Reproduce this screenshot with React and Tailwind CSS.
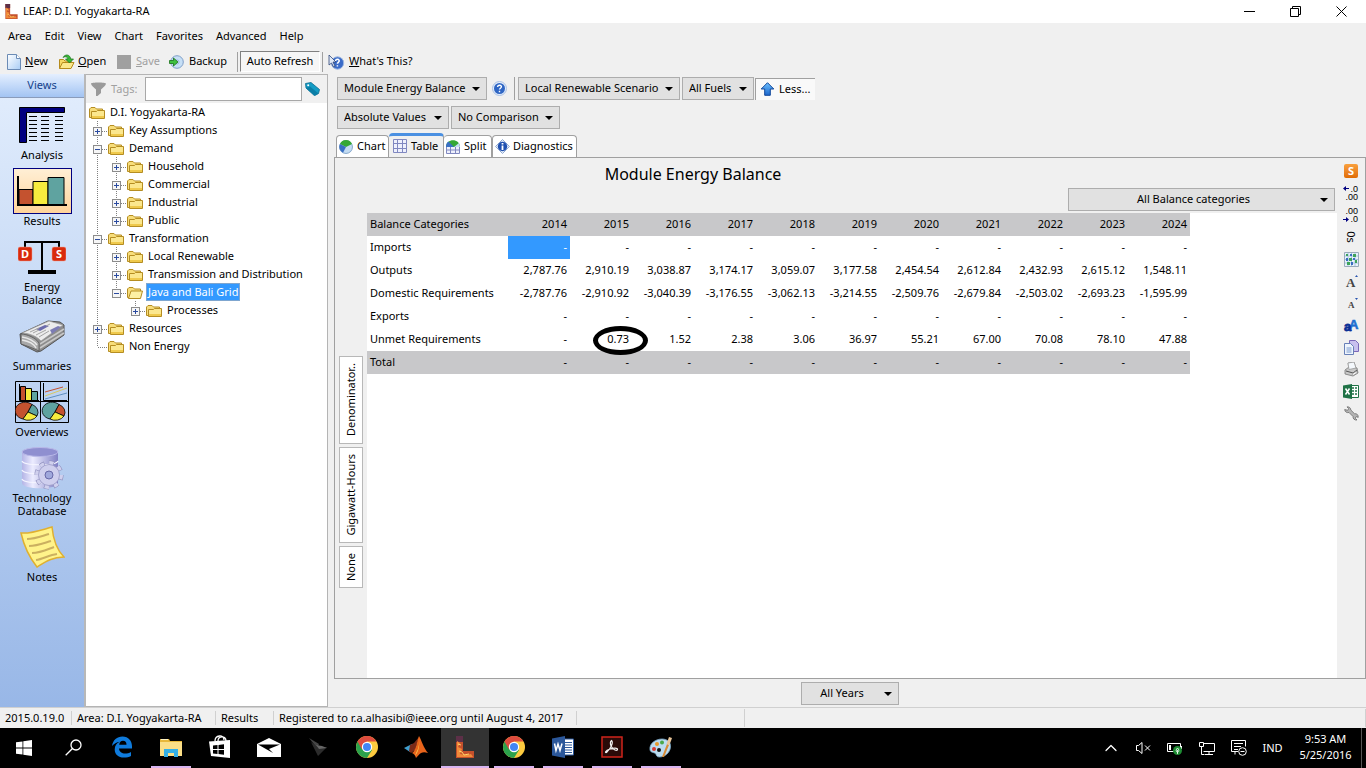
import { ChevronUp } from "lucide-react";

const menus = ["Area", "Edit", "View", "Chart", "Favorites", "Advanced", "Help"];

const views = [
  { lines: ["Analysis"], icon: <AnalysisIcon /> },
  { lines: ["Results"], icon: <ResultsIcon />, active: true },
  { lines: ["Energy", "Balance"], icon: <BalanceIcon /> },
  { lines: ["Summaries"], icon: <SummariesIcon /> },
  { lines: ["Overviews"], icon: <OverviewsIcon /> },
  { lines: ["Technology", "Database"], icon: <DatabaseIcon /> },
  { lines: ["Notes"], icon: <NotesIcon /> },
];

// guides: one letter per indent cell
// v = line through, e = blank, + / - = expander (more siblings), p / m = expander (last), l = last leaf
const tree = [
  { label: "D.I. Yogyakarta-RA", guides: "" },
  { label: "Key Assumptions", guides: "+" },
  { label: "Demand", guides: "-" },
  { label: "Household", guides: "v+" },
  { label: "Commercial", guides: "v+" },
  { label: "Industrial", guides: "v+" },
  { label: "Public", guides: "vp" },
  { label: "Transformation", guides: "-" },
  { label: "Local Renewable", guides: "v+" },
  { label: "Transmission and Distribution", guides: "v+" },
  { label: "Java and Bali Grid", guides: "vm", selected: true },
  { label: "Processes", guides: "vep" },
  { label: "Resources", guides: "+" },
  { label: "Non Energy", guides: "l" },
];

const years = [2014, 2015, 2016, 2017, 2018, 2019, 2020, 2021, 2022, 2023, 2024];
const dashes = years.map(() => "-");

const rows = [
  { name: "Imports", values: dashes },
  { name: "Outputs", values: ["2,787.76", "2,910.19", "3,038.87", "3,174.17", "3,059.07", "3,177.58", "2,454.54", "2,612.84", "2,432.93", "2,615.12", "1,548.11"] },
  { name: "Domestic Requirements", values: ["-2,787.76", "-2,910.92", "-3,040.39", "-3,176.55", "-3,062.13", "-3,214.55", "-2,509.76", "-2,679.84", "-2,503.02", "-2,693.23", "-1,595.99"] },
  { name: "Exports", values: dashes },
  { name: "Unmet Requirements", values: ["-", "0.73", "1.52", "2.38", "3.06", "36.97", "55.21", "67.00", "70.08", "78.10", "47.88"] },
];

export default function App() {
  return (
    <div className="flex flex-col min-h-screen bg-[#f0f0f0] font-['Noto_Sans',sans-serif] text-xs text-black whitespace-nowrap cursor-default">
      <TitleBar />
      <MenuBar />
      <Toolbar />
      <div className="flex flex-1">
        <ViewBar />
        <TreePanel />
        <ResultsPanel />
      </div>
      <StatusBar />
      <Taskbar />
    </div>
  );
}

function TitleBar() {
  return (
    <header className="flex items-center h-[23px] bg-white pl-1 pr-0.5">
      <LeapIcon size={15} />
      <h1 className="ml-1 flex-1 text-[11px]">LEAP: D.I. Yogyakarta-RA</h1>
      <button aria-label="Minimize" className="w-[46px] h-5 flex items-center justify-center">
        <svg width="11" height="11"><path d="M0 5.500h11" stroke="#000" /></svg>
      </button>
      <button aria-label="Restore" className="w-[46px] h-5 flex items-center justify-center">
        <svg width="11" height="11" fill="none" stroke="#000"><path d="M.5 2.500h8v8h-8zM2.500 2.500v-2h8v8h-2" /></svg>
      </button>
      <button aria-label="Close" className="w-[46px] h-5 flex items-center justify-center">
        <svg width="11" height="11" stroke="#000"><path d="M.5.500l10 10M10.500.500l-10 10" /></svg>
      </button>
    </header>
  );
}

function MenuBar() {
  return (
    <nav className="flex items-center h-[26px] pl-2 gap-[13px] text-[11px]">
      {menus.map((m) => <button key={m}>{m}</button>)}
    </nav>
  );
}

function Toolbar() {
  return (
    <div className="flex items-center h-[25px] pl-[7px] text-[11px]">
      <button className="flex items-center gap-1 w-[51px]">
        <svg width="14" height="16" viewBox="0 0 14 16">
          <defs>
            <linearGradient id="page" x2="1" y2="1"><stop offset="0" stopColor="#fff" /><stop offset="1" stopColor="#a9cdf5" /></linearGradient>
          </defs>
          <path d="M.5.500h9l4 4v11H.5z" fill="url(#page)" stroke="#6b8bb5" />
          <path d="M9.500.500v4h4" fill="#fff" stroke="#6b8bb5" />
        </svg>
        <span><u>N</u>ew</span>
      </button>
      <button className="flex items-center gap-[3px] w-[59px]">
        <svg width="17" height="16" viewBox="0 0 17 16">
          <path d="M1.500 14.500V5.500h4l1.500 1.500h6v3" fill="#f6d864" stroke="#b58b1c" />
          <path d="M1.500 14.500l3-6h11.500l-3 6z" fill="#fbe88c" stroke="#b58b1c" />
          <path d="M5 3.500C7.500-.5 12 .5 12.800 5h2.700l-4 4-4-4h2.400C9.500 3 7.500 2 5 3.500z" fill="#37b837" stroke="#187018" strokeWidth=".7" />
        </svg>
        <span><u>O</u>pen</span>
      </button>
      <button disabled className="flex items-center gap-[5px] w-[52px] text-[#a0a0a0]">
        <span className="size-3.5 bg-[#a0a0a0]" />
        <span><u>S</u>ave</span>
      </button>
      <button className="flex items-center gap-[5px] w-[68px]">
        <svg width="15" height="14" viewBox="0 0 15 14">
          <circle cx="8" cy="7" r="6.300" fill="#c6dff6" stroke="#7f9fc8" />
          <circle cx="8" cy="7" r="2" fill="#fff" stroke="#8fb0d8" />
          <path d="M.5 5.500h4V3l4.500 4-4.500 4V8.500h-4z" fill="#3fc03f" stroke="#187018" strokeWidth=".8" />
        </svg>
        Backup
      </button>
      <span className="w-px h-5 bg-[#a0a0a0] mr-0.5" />
      <button className="h-[21px] w-20 bg-[#f6f6f6] border border-r-white border-b-white border-[#808080]">Auto Refresh</button>
      <span className="w-px h-5 bg-[#a0a0a0] ml-0.5 mr-[5px]" />
      <button className="flex items-center gap-1">
        <svg width="17" height="16" viewBox="0 0 17 16">
          <circle cx="9.500" cy="9" r="6.200" fill="#3a6bc8" stroke="#9fb8e0" />
          <path d="M7.500 7c.4-2.500 4.200-2 3.700.2-.3 1.200-1.800 1.200-1.800 2.600M9.400 11.300v1.200" stroke="#fff" strokeWidth="1.500" fill="none" />
          <path d="M1 1v10l2.500-2 2 4 1.500-1-2-4h3z" fill="#dfe8f6" stroke="#304878" strokeWidth=".8" />
        </svg>
        <span><u>W</u>hat's This?</span>
      </button>
    </div>
  );
}

function ViewBar() {
  return (
    <aside className="w-[86px] border-r-2 border-[#b8b8b8] bg-linear-to-b from-[#e3eefd] to-[#98b7e7]">
      <h2 className="h-6 flex items-center justify-center text-[11px] text-[#15428b] border-b border-[#8a9cba] bg-linear-to-b from-[#e4efff] to-[#a3c4f2]">Views</h2>
      <div className="flex flex-col gap-[7px] pt-1">
        {views.map((v) => (
          <button key={v.lines[0]} className="flex flex-col items-center text-[11px] leading-[13px]">
            <span className={v.active ? "h-[46px] w-[59px] flex items-center justify-center border border-[#000080] bg-linear-to-b from-[#ffefd5] to-[#ffd39a]" : "h-[46px] flex items-center justify-center"}>
              {v.icon}
            </span>
            {v.lines.map((l) => <span key={l}>{l}</span>)}
          </button>
        ))}
      </div>
    </aside>
  );
}

function TreePanel() {
  return (
    <section className="w-[242px] flex flex-col border-r border-b border-[#b4b4b4]">
      <div className="flex items-center h-[29px] pl-[5px] border-t border-[#b4b4b4]">
        <svg width="15" height="14" viewBox="0 0 15 14" fill="#9a9a9a"><path d="M0 1.500C0 0 15 0 15 1.500c0 2-3 4-5 6V11l-3.500 3H5V7.500c-2-2-5-4-5-6z" /></svg>
        <label htmlFor="tags" className="ml-[5px] w-[34px] text-[11px] text-[#a0a0a0]">Tags:</label>
        <input id="tags" className="w-[157px] h-6 bg-white border border-[#a8a8a8] outline-none px-1" />
        <svg width="15" height="14" viewBox="0 0 15 14" className="ml-[3px]">
          <path d="M.5 1.500L6 .5l8.500 7-1 4-4 2.200L1 6z" fill="#149cc4" stroke="#0b6c90" strokeWidth=".8" />
          <path d="M1 6l8.500 7.500 4-2L5 4.500z" fill="#0b7ea6" />
          <circle cx="3.200" cy="3.200" r="1" fill="#fff" />
        </svg>
      </div>
      <ul className="flex-1 bg-white pl-[3px] text-[11px]">
        {tree.map((n) => (
          <li key={n.label} className="flex items-center h-[18px]">
            {[...n.guides].map((g, i) => <Guide key={i} kind={g} />)}
            <FolderIcon open={n.selected} />
            <button className={n.selected ? "ml-[3px] px-px h-[18px] leading-4 bg-[#3399ff] border border-[#7fa6cf] text-white" : "ml-[5px] leading-4"}>{n.label}</button>
          </li>
        ))}
      </ul>
    </section>
  );
}

function Guide({ kind }) {
  const hasBox = "+-pm".includes(kind);
  const through = "v+-".includes(kind);
  return (
    <svg width="19" height="18" className="shrink-0" fill="none">
      {kind !== "e" && <path d={through ? "M8.500 0v18" : "M8.500 0v10"} stroke="#808080" strokeDasharray="1 1" />}
      {kind !== "e" && kind !== "v" && <path d="M9 10.500h9" stroke="#808080" strokeDasharray="1 1" />}
      {hasBox && <rect x="4.500" y="6.500" width="8" height="8" fill="#f6f6f6" stroke="#8c8c8c" />}
      {hasBox && <path d="M6 10.500h5" stroke="#2b4ba0" />}
      {(kind === "+" || kind === "p") && <path d="M8.500 8v5" stroke="#2b4ba0" />}
    </svg>
  );
}

function FolderIcon({ open }) {
  return (
    <svg width="16" height="14" viewBox="0 0 16 14" className="shrink-0 mt-0.5">
      <path d="M.5 11.500V3l1.500-1.500h4L7.500 3h6v8.500z" fill="#f7dd7a" stroke="#b58d22" />
      {open
        ? <path d="M1.500 12.500l2.500-7.500h11.500l-2 7.500z" fill="#fdf0a4" stroke="#b58d22" />
        : <path d="M2.500 12.500V5.500h5l1-1h7v8z" fill="#fbe78e" stroke="#b58d22" />}
      {!open && <path d="M3 11h12" stroke="#efc94c" strokeWidth="2" />}
    </svg>
  );
}

function DropDown({ label, width, center }) {
  return (
    <span className={`relative inline-flex ${width}`}>
      <select aria-label={label} className={`appearance-none w-full h-[23px] bg-[#e1e1e1] border border-[#adadad] text-[11px] ${center ? "[text-align-last:center] pr-4" : "pl-1.5"}`}>
        <option>{label}</option>
      </select>
      <svg width="8" height="4" className="absolute right-[7px] top-[10px] pointer-events-none"><path d="M0 0h8L4 4z" /></svg>
    </span>
  );
}

function ResultsPanel() {
  return (
    <main className="flex-1 min-w-0 flex flex-col">
      <div className="flex items-center pl-[9px] pt-[3px]">
        <DropDown label="Module Energy Balance" width="w-[150px]" />
        <button aria-label="Help" className="ml-[5px] mr-[7px]">
          <svg width="15" height="15" viewBox="0 0 15 15">
            <circle cx="7.500" cy="7.500" r="7" fill="#e4edfa" stroke="#a9c0e4" />
            <circle cx="7.500" cy="7.500" r="5.500" fill="#2f66c4" />
            <path d="M5.500 6c.3-2.500 4.200-2.300 3.900 0-.2 1.200-1.900 1.300-1.900 2.600M7.500 9.800v1.400" stroke="#fff" strokeWidth="1.400" fill="none" />
          </svg>
        </button>
        <span className="w-px h-[23px] bg-[#a0a0a0] mr-[3px]" />
        <div className="flex gap-0.5">
          <DropDown label="Local Renewable Scenario" width="w-[162px]" />
          <DropDown label="All Fuels" width="w-[72px]" />
        </div>
        <button className="flex items-center gap-1 h-[22px] w-[60px] ml-px pl-1 bg-[#f9f9f9] border-t border-l border-[#a0a0a0] text-[11px]">
          <svg width="15" height="14" viewBox="0 0 15 14">
            <defs>
              <linearGradient id="arrow" x2="0" y2="1"><stop offset="0" stopColor="#6cc0ff" /><stop offset="1" stopColor="#1b66cc" /></linearGradient>
            </defs>
            <path d="M7.500.7l6.300 6.300h-3.500v6.300H4.700V7H1.200z" fill="url(#arrow)" stroke="#12489c" />
          </svg>
          Less...
        </button>
      </div>
      <div className="flex gap-0.5 pl-[9px] pt-1.5">
        <DropDown label="Absolute Values" width="w-28" />
        <DropDown label="No Comparison" width="w-[109px]" />
      </div>

      <div role="tablist" className="flex items-end pl-2 h-[28px] text-[11px]">
        <button role="tab" className="flex items-center gap-1 w-[53px] h-[22px] pl-0.5 bg-white border border-b-0 border-[#a0a0a0] rounded-t-sm"><GlobeIcon />Chart</button>
        <button role="tab" aria-selected="true" className="flex items-center gap-1 w-[55px] h-[25px] pl-1 -mb-px pb-0.5 border-t-3 border-r border-t-[#4a90e2] border-r-[#a0a0a0] bg-[#f0f0f0] rounded-t-sm"><GridIcon />Table</button>
        <button role="tab" className="flex items-center gap-1 w-12 h-[22px] pl-0.5 bg-white border border-l-0 border-b-0 border-[#a0a0a0] rounded-t-sm"><SplitIcon />Split</button>
        <button role="tab" className="flex items-center gap-[3px] w-[85px] h-[22px] pl-0.5 bg-white border border-b-0 border-[#a0a0a0] rounded-t-sm"><InfoIcon />Diagnostics</button>
      </div>

      <div className="flex-1 flex ml-1.5 border border-[#a0a0a0]">
        <div className="flex-1 min-w-0 flex flex-col">
          <h2 className="h-[30px] pt-px pr-[286px] flex items-center justify-center text-base">Module Energy Balance</h2>
          <div className="flex justify-end pr-0.5 pb-0.5">
            <DropDown label="All Balance categories" width="w-[267px]" center />
          </div>
          <div className="flex flex-1">
            <div className="w-8 pl-1 pt-[143px] flex flex-col gap-[3px] text-[11px]">
              <SideButton height="h-[88px]">Denominator..</SideButton>
              <SideButton height="h-24">Gigawatt-Hours</SideButton>
              <SideButton height="h-[42px]">None</SideButton>
            </div>
            <div className="flex-1 bg-white">
              <BalanceTable />
            </div>
          </div>
        </div>
        <IconStrip />
      </div>

      <div className="flex justify-center items-center h-7 pl-1.5">
        <DropDown label="All Years" width="w-[98px]" center />
      </div>
    </main>
  );
}

function SideButton({ height, children }) {
  return (
    <button className={`w-6 flex items-center justify-center bg-white border border-[#b8b8b8] ${height}`}>
      <span className="[writing-mode:vertical-rl] rotate-180">{children}</span>
    </button>
  );
}

function BalanceTable() {
  return (
    <table className="table-fixed w-[823px] text-[11px]">
      <thead>
        <tr className="h-[23px] bg-[#c8c8ca]">
          <th className="w-[141px] pl-[3px] text-left font-normal">Balance Categories</th>
          {years.map((y) => <th key={y} className="pr-[3px] text-right font-normal">{y}</th>)}
        </tr>
      </thead>
      <tbody>
        {rows.map((r, ri) => (
          <tr key={r.name} className="h-[23px]">
            <td className="pl-[3px]">{r.name}</td>
            {r.values.map((v, i) => (
              <td key={i} className={ri === 0 && i === 0 ? "pr-[3px] text-right bg-[#3399ff] text-white" : "relative pr-[3px] text-right"}>
                {v}
                {v === "0.73" && <span className="absolute left-[23px] -top-0.5 w-[55px] h-[29px] border-[5px] border-black rounded-[50%]" />}
              </td>
            ))}
          </tr>
        ))}
      </tbody>
      <tfoot>
        <tr className="h-[23px] bg-[#c8c8ca]">
          <td className="pl-[3px]">Total</td>
          {years.map((y) => <td key={y} className="pr-[3px] text-right">-</td>)}
        </tr>
      </tfoot>
    </table>
  );
}

function IconStrip() {
  const items = [
    ["Sankey", <span className="size-3.5 rounded-xs bg-linear-to-b from-[#f9a03c] to-[#e06c00] text-white text-[11px] leading-[14px] font-bold">S</span>],
    ["More decimals", <svg width="16" height="16" viewBox="0 0 16 16"><path d="M0 3.500L3 1v2h3v1H3v2z" fill="#000080" /><Digits top=".0" bottom=".00" /></svg>],
    ["Fewer decimals", <svg width="16" height="16" viewBox="0 0 16 16"><path d="M6 12.500L3 10v2H0v1h3v2z" fill="#000080" /><Digits top=".00" bottom=".0" /></svg>],
    ["Show zeros", <span className="rotate-90 text-[11px] leading-3">0s</span>],
    ["Grid", (
      <svg width="15" height="15" viewBox="0 0 15 15">
        <path d="M.5.500h14v14H.5z" fill="#e8f2fa" stroke="#9ab" />
        <path d="M4 1v13M7.500 1v13M11 1v13M1 4h13M1 7.500h13M1 11h13" stroke="#a8c4e0" />
        <path d="M2 2h2v2H2zM9 2h3v3H9zM5 6h3v3H5zM11 8h2v3h-2zM3 10h3v3H3z" fill="#3da35a" />
        <path d="M6 2h2v2H6zM2 6h2v3H2zM9 6h2v2H9zM7 10h2v3H7z" fill="#3a6cc0" />
      </svg>
    )],
    ["Larger font", <svg width="15" height="15" viewBox="0 0 15 15"><text x="2" y="13" fontSize="13" fontWeight="bold" fontFamily="Liberation Serif, serif" fill="#444">A</text><path d="M11 3l1.500-2L14 3z" fill="#2a55b0" /></svg>],
    ["Smaller font", <svg width="15" height="15" viewBox="0 0 15 15"><text x="4" y="12" fontSize="9" fontWeight="bold" fontFamily="Liberation Serif, serif" fill="#444">A</text><path d="M11 2l1.500 2L14 2z" fill="#2a55b0" /></svg>],
    ["Font", <svg width="18" height="16" viewBox="0 0 18 16" fontWeight="bold" fontFamily="Liberation Sans, sans-serif"><text x="7" y="12" fontSize="13" fill="#1c6fd0" stroke="#1c6fd0" strokeWidth=".6">A</text><text x="2" y="14" fontSize="13" fill="#0a2f96" stroke="#0a2f96" strokeWidth=".8">a</text></svg>],
    ["Copy", (
      <svg width="15" height="15" viewBox="0 0 15 15">
        <path d="M5.500.500h6l3 3v8h-9z" fill="#c9c0ee" stroke="#7b68b8" />
        <path d="M.5 3.500h6l3 3v8H.5z" fill="#eef4fc" stroke="#6880b8" />
        <path d="M2.500 8h5M2.500 10h5M2.500 12h5" stroke="#7b9ad0" />
      </svg>
    )],
    ["Print", (
      <svg width="15" height="15" viewBox="0 0 15 15">
        <path d="M4 1l6-1 2 6-7 2z" fill="#fff" stroke="#999" strokeWidth=".8" />
        <path d="M1 8l4-3 8 1 1 5-5 3-8-2z" fill="#c8c8c8" stroke="#777" strokeWidth=".8" />
        <path d="M4 1l6-1 2 6-7 1.500z" fill="#f4f8fc" stroke="#999" strokeWidth=".8" />
        <path d="M2 9l7 2 4-3" stroke="#555" fill="none" />
        <path d="M8 12l5-3v2l-4 2.500z" fill="#fff" stroke="#888" strokeWidth=".6" />
      </svg>
    )],
    ["Excel", (
      <svg width="16" height="15" viewBox="0 0 16 15">
        <path d="M8 1.500h7.500v12H8z" fill="#fff" stroke="#1f7246" />
        <path d="M9 4h2M9 7h2M9 10h2M12 4h2M12 7h2M12 10h2" stroke="#1f7246" strokeWidth="1.500" />
        <path d="M0 1.500L9 0v15l-9-1.500z" fill="#1f7246" />
        <path d="M2.500 4.500l4 6M6.500 4.500l-4 6" stroke="#fff" strokeWidth="1.500" />
      </svg>
    )],
    ["Settings", (
      <svg width="15" height="15" viewBox="0 0 15 15">
        <path d="M.7 3.500C.7 6 3 7 5 6.500l4 4c-.3 2 1.500 4 4 3.500l-1.800-1.800 1-1.600 2 .8c.3-2.600-1.400-4-3.700-3.700L6.800 4C7 2 5 .5 3 .9l1.700 1.800-1 1.600z" fill="#b4b4b4" stroke="#6c6c6c" strokeWidth=".8" />
      </svg>
    )],
  ];
  return (
    <div className="w-7 pt-0.5 flex flex-col items-center">
      {items.map(([name, icon]) => (
        <button key={name} aria-label={name} className="w-6 h-[22px] flex items-center justify-center">{icon}</button>
      ))}
    </div>
  );
}

function Digits({ top, bottom }) {
  return (
    <g fontSize="9" fontFamily="Liberation Sans, sans-serif" textAnchor="end">
      <text x="15" y="7">{top}</text>
      <text x="15" y="15">{bottom}</text>
    </g>
  );
}

function StatusBar() {
  return (
    <footer className="flex items-center h-[21px] border-t border-[#d0d0d0] text-[11px]">
      <span className="w-[72px] pl-[5px] border-r border-[#d0d0d0]">2015.0.19.0</span>
      <span className="w-36 pl-[5px] border-r border-[#d0d0d0]">Area: D.I. Yogyakarta-RA</span>
      <span className="w-[58px] pl-[5px] border-r border-[#d0d0d0]">Results</span>
      <span className="w-[303px] pl-[5px] border-r border-[#d0d0d0]">Registered to r.a.alhasibi@ieee.org until August 4, 2017</span>
      <span className="w-[168px] h-[18px] border-r border-[#d0d0d0]" />
      <span className="flex-1 h-[18px] border-r border-[#d0d0d0]" />
    </footer>
  );
}

function Taskbar() {
  const apps = [
    ["Search", <svg width="17" height="17" viewBox="0 0 17 17" fill="none" stroke="#fff" strokeWidth="1.300"><circle cx="11" cy="6" r="5" /><path d="M7.500 9.500L.7 16.300" /></svg>],
    ["Edge", (
      <svg width="22" height="22" viewBox="0 0 22 22">
        <path d="M1 10C2 4 6 .5 11.500.5 17.500.5 21 5 21 10v2.500H8c.2 3.500 3 5 6 5 2.200 0 4.200-.6 6-1.600v4.200c-2 1-4.300 1.500-7 1.500-5.800 0-9.300-3.500-9.300-8.200 0-3.500 1.800-6.200 5-7.700C5.500 6.200 3 7.600 1 10zm7.200-1.300h7.300C15.500 6 14.300 4.800 12 4.800c-2.200 0-3.500 1.500-3.800 3.900z" fill="#0f7bdc" />
      </svg>
    )],
    ["File Explorer", (
      <svg width="22" height="19" viewBox="0 0 22 19">
        <path d="M0 1h9l1 2h12v15H0z" fill="#e8b83a" />
        <path d="M0 4h22v14H0z" fill="#fbdf87" />
        <path d="M1 1.500h7" stroke="#fff3c4" />
        <path d="M4 19v-8h14v8h-4v-4H8v4z" fill="#35b0e6" />
      </svg>
    ), "run"],
    ["Store", (
      <svg width="22" height="24" viewBox="0 0 22 24">
        <path d="M6 6c0-6 9-7 9-1M9 6c0-5 8-6 8 0" fill="none" stroke="#fff" strokeWidth="1.300" />
        <path d="M0 6.500L21 5v18L2 21z" fill="#fff" />
        <path d="M4 10.500l4.500-.5v4H4zM9.500 9.900l5.500-.6V14H9.500zM4 15h4.500v4L4 18.500zM9.500 15H15v4.700l-5.500-.6z" fill="#000" />
      </svg>
    )],
    ["Mail", (
      <svg width="24" height="19" viewBox="0 0 24 19">
        <path d="M0 6L12 0l12 6v13H0z" fill="#fff" />
        <path d="M1 6.500h22L12 11l4 4z" fill="#000" />
      </svg>
    )],
    ["Viewer", (
      <svg width="20" height="20" viewBox="0 0 20 20">
        <path d="M1 1l10 6-2 4z" fill="#444" />
        <path d="M3 5l8 6 8-1-9 9z" fill="#2c2c2c" />
        <path d="M8 8l6 1 5 2-8 1z" fill="#666" />
      </svg>
    )],
    ["Chrome", <ChromeIcon />],
    ["Matlab", (
      <svg width="24" height="22" viewBox="0 0 24 22">
        <path d="M0 12l8-4 3 3-5 5z" fill="#3f9fcf" />
        <path d="M6 9l4-2 5-6-4 13-4 3-2-2z" fill="#7a2a18" />
        <path d="M15 0c2 3 5 13 9 17-3-1-5-1-7 0s-3 3-5 5c-1-3-2-4-4-5 4-2 5-12 7-17z" fill="#e8641b" />
        <path d="M15 0c1 5 0 12-3 17l-1 3c4-4 5-12 4-20z" fill="#f9c04a" />
      </svg>
    )],
    ["LEAP", <LeapIcon size={22} />, "active"],
    ["Chrome window", <ChromeIcon />, "run"],
    ["Word", (
      <svg width="22" height="22" viewBox="0 0 22 22">
        <path d="M10 3h11.500v16H10z" fill="#fff" stroke="#2b579a" />
        <path d="M13 6.500h7M13 9h7M13 11.500h7M13 14h7M13 16.500h7" stroke="#2b579a" />
        <path d="M0 2.500L13 0v22L0 19.500z" fill="#2b579a" />
        <path d="M2.500 7.500l1.500 7 2-6.500 2 6.500 2-7" fill="none" stroke="#fff" strokeWidth="1.500" />
      </svg>
    ), "run"],
    ["Acrobat", (
      <svg width="22" height="22" viewBox="0 0 22 22" fill="none">
        <path d="M1 1h20v20H1z" fill="#2a0a08" stroke="#d0241b" strokeWidth="1.500" />
        <path d="M10.500 4.500c2 2 0 7-5 12-2 .5-1-2 3-3.300s8-1.500 8 .3-4.500.5-6.500-3.500c-.8-2-1-5 .5-5.500z" stroke="#f2f2f2" strokeWidth="1.200" />
      </svg>
    ), "run"],
    ["Paint", (
      <svg width="24" height="22" viewBox="0 0 24 22">
        <path d="M1 14C0 7 7 3 13 3c5 0 9 3 8.500 8-.5 6-6 10-11 10-4 0-2.500-3-5-4S1.500 16 1 14z" fill="#bcdcf0" stroke="#7ba7c7" strokeWidth=".8" />
        <circle cx="5" cy="13" r="2" fill="#d83a34" /><circle cx="8" cy="8" r="2" fill="#e89a2c" />
        <circle cx="13" cy="6.500" r="2" fill="#4aa84a" /><circle cx="10" cy="14" r="2" fill="#111" />
        <path d="M13 21l5-13 2 1-5 12z" fill="#d98a34" />
        <path d="M17.500 8L20 1l3 1-2.500 7z" fill="#eac69a" />
      </svg>
    ), "run"],
  ];
  return (
    <div className="flex h-10 bg-black text-white text-[11px]">
      <button aria-label="Start" className="w-12 flex items-center justify-center">
        <svg width="16" height="16" viewBox="0 0 16 16" fill="#fff"><path d="M0 2.300L6.500 1.400v6.200H0zM7.300 1.300L16 0v7.600H7.300zM0 8.400h6.500v6.200L0 13.700zM7.300 8.400H16V16l-8.700-1.300z" /></svg>
      </button>
      <div className="flex flex-1 gap-px pl-px">
        {apps.map(([name, icon, state]) => (
          <button key={name} aria-label={name} className={state === "active" ? "w-12 flex flex-col items-center bg-[#333]" : "w-12 flex flex-col items-center"}>
            <span className="flex-1 flex items-center">{icon}</span>
            <span className={state === "active" ? "h-0.5 w-12 bg-[#d8b4f0]" : state === "run" ? "h-0.5 w-10 bg-[#d8b4f0]" : "h-0.5"} />
          </button>
        ))}
      </div>
      <button aria-label="Show hidden icons" className="w-8 flex items-center justify-center"><ChevronUp size={20} strokeWidth={1.5} /></button>
      <button aria-label="Volume" className="w-8 flex items-center justify-center">
        <svg width="16" height="14" viewBox="0 0 16 14" fill="none" stroke="#fff"><path d="M1.500 4.500h2L7 1.500v11L3.500 9.500h-2zM10 4.500l5 5M15 4.500l-5 5" /></svg>
      </button>
      <button aria-label="Battery" className="w-8 flex items-center justify-center">
        <svg width="16" height="14" viewBox="0 0 16 14" fill="none">
          <path d="M.5 2.500h13v8H.5zM14.500 5v3" stroke="#fff" /><path d="M2 4h2v5H2z" fill="#fff" />
          <circle cx="10.500" cy="9.500" r="4.500" fill="#1e8c33" /><path d="M10.500 7c-3 3 0 4.500 0 4.500s3-1.500 0-4.500zM10.500 9v4" stroke="#fff" strokeWidth=".8" />
        </svg>
      </button>
      <button aria-label="Network" className="w-8 flex items-center justify-center">
        <svg width="16" height="15" viewBox="0 0 16 15" fill="none" stroke="#fff"><path d="M4.500 2.500h11v8h-11M10 10.500v3M6 13.500h8M.5 1.500h4v4h-4zM2.500 5.500v8h3" /></svg>
      </button>
      <button aria-label="Notifications" className="w-8 flex items-center justify-center">
        <svg width="16" height="16" viewBox="0 0 16 16" fill="none" stroke="#fff"><path d="M7 11.500H.5V.500h14v6M3 3.500h9M3 6.500h7M3 9.500h4M4 11.500v3" /><circle cx="11.500" cy="11.500" r="3.800" fill="#000" /><path d="M9.500 11.500h4" /></svg>
      </button>
      <button className="w-[35px]">IND</button>
      <button className="w-[71px] pb-0.5 leading-4">9:53 AM<br />5/25/2016</button>
      <button aria-label="Show desktop" className="w-[5px] border-l border-[#555]" />
    </div>
  );
}

function LeapIcon({ size }) {
  return (
    <svg width={size} height={size} viewBox="0 0 22 22">
      <path d="M2 0h7v15h11v7H2z" fill="#c4502c" />
      <path d="M2 0h7v6H2z" fill="#5d3048" />
      <path d="M3 5l3 2-2 4 4 2-2 5 6 1 5-1 2 3H3z" fill="#f08a3a" />
      <path d="M5 15l3 1 2 3 5-1M4 8l3 1" stroke="#ffd36a" fill="none" />
    </svg>
  );
}

function ChromeIcon() {
  return (
    <svg width="22" height="22" viewBox="0 0 22 22">
      <circle cx="11" cy="11" r="11" fill="#fcca3f" />
      <path d="M11 11L1.500 5.500A11 11 0 0 0 11 22l5-8z" fill="#2ba24c" />
      <path d="M1.500 5.500A11 11 0 0 1 20.500 5.500H11l-5 8z" fill="#dd4b3e" />
      <circle cx="11" cy="11" r="5.200" fill="#fff" />
      <circle cx="11" cy="11" r="4" fill="#4285f4" />
    </svg>
  );
}

function GlobeIcon() {
  return (
    <svg width="14" height="14" viewBox="0 0 14 14">
      <circle cx="7" cy="7" r="6.500" fill="#c4dcf2" stroke="#4a7ab0" strokeWidth=".6" />
      <path d="M7 7L1 4a6.500 6.500 0 0 1 12 0z" fill="#35a835" />
      <path d="M7 7L1 4a6.500 6.500 0 0 0 3 8.700z" fill="#3a70c4" />
    </svg>
  );
}

function GridIcon() {
  return (
    <svg width="14" height="14" viewBox="0 0 14 14" fill="#eef0fc" stroke="#8088c0"><path d="M.5.500h13v13H.5zM4.500 1v12M9.500 1v12M1 4.500h12M1 9.500h12" /></svg>
  );
}

function SplitIcon() {
  return (
    <svg width="14" height="14" viewBox="0 0 14 14">
      <path d="M.5 6.500h13v7H.5zM4.500 7v6M9.500 7v6M1 10h12" fill="#eef0fc" stroke="#8088c0" />
      <path d="M0 7c0-9 14-9 14 0z" fill="#35a835" />
      <path d="M0 7c0-3 1-4.500 2.500-5.500L8 7z" fill="#3a70c4" />
      <path d="M8 7l5-4 1 4z" fill="#c4dcf2" />
    </svg>
  );
}

function InfoIcon() {
  return (
    <svg width="15" height="15" viewBox="0 0 15 15">
      <path d="M7.500.5l7 7-7 7-7-7z" fill="#e4ecf8" stroke="#8fa8d0" />
      <circle cx="7.500" cy="7.500" r="4.700" fill="#1f50b0" />
      <path d="M7.500 4v1.500M7.500 6.500V11" stroke="#fff" strokeWidth="1.800" />
    </svg>
  );
}

function AnalysisIcon() {
  return (
    <svg width="46" height="36" viewBox="0 0 46 36">
      <path d="M.5.500h45v5H7.500v30h-7z" fill="#000080" stroke="#000" />
      <path d="M10 9.500h8M10 13.500h8M10 17.500h8M10 21.500h8M10 25.500h8M10 29.500h8M10 33.500h8M22 9.500h8M22 13.500h8M22 17.500h8M22 21.500h8M22 25.500h8M22 29.500h8M22 33.500h8M36 9.500h8M36 13.500h8M36 17.500h8M36 21.500h8M36 25.500h8M36 29.500h8M36 33.500h8" stroke="#000" />
    </svg>
  );
}

function ResultsIcon() {
  return (
    <svg width="50" height="32" viewBox="0 0 50 32" stroke="#000">
      <path d="M2 14.500h14v15H2z" fill="#c4522f" />
      <path d="M16 6.500h15v23H16z" fill="#f7ec3e" />
      <path d="M31 2.500h16v27H31z" fill="#5fa3a0" />
      <path d="M1 1v29h49" fill="none" strokeWidth="2" />
    </svg>
  );
}

function BalanceIcon() {
  return (
    <svg width="48" height="34" viewBox="0 0 48 34">
      <path d="M7 8V2h34v6M24 2v28" stroke="#000" strokeWidth="2" fill="none" />
      <path d="M10 30h28v4H10z" />
      <g fill="#d92a0c" stroke="#f0a090" strokeWidth=".5"><rect width="14" height="14" y="7" rx="2" /><rect x="34" width="14" height="14" y="7" rx="2" /></g>
      <g fill="#fff" fontSize="11" fontWeight="bold" textAnchor="middle"><text x="7" y="18">D</text><text x="41" y="18">S</text></g>
    </svg>
  );
}

function SummariesIcon() {
  return (
    <svg width="46" height="33" viewBox="0 0 46 33">
      <path d="M1 14L29 1l12 1 4 3v10L22 31l-4 1L2 24z" fill="#8c8c8c" stroke="#555" />
      <path d="M3 13L30 1l14 4-22 16c-4-5-13-8-19-8z" fill="#ececec" stroke="#999" strokeWidth=".7" />
      <path d="M17 9l9-4 4 1-9 5z" fill="#6c6cac" />
      <path d="M31 10l8-4 3 1-9 7z" fill="#7c7cb4" />
      <path d="M11 12l9-4M14 13l6-3M17 15l10-5M20 17l10-6M27 6l4-2" stroke="#a4a4a4" />
      <path d="M21 24l24-15M21 28l24-15" stroke="#c8c8c8" strokeWidth="1.500" />
      <path d="M2 14c6 0 15 4 18 9v8C14 28 8 26 2 24z" fill="#a8a8a8" stroke="#555" strokeWidth=".8" />
      <path d="M3 17c6 1 12 4 15 8M3 20c6 1 12 4 14 8" stroke="#e8e8e8" fill="none" strokeWidth="1.500" />
    </svg>
  );
}

function OverviewsIcon() {
  return (
    <svg width="54" height="42" viewBox="0 0 54 42" stroke="#000">
      <path d="M.5.500h53v41H.5zM25.500 0v42M0 20.500h54" fill="none" />
      <path d="M5.500 5.500h5v14h-5z" fill="#c4522f" /><path d="M10.500 7.500h6v12h-6z" fill="#f7ec3e" /><path d="M16.500 10.500h6v9h-6z" fill="#5fa3a0" />
      <path d="M4.500 3v16.500H24M28.500 2v17.500H52" fill="none" />
      <path d="M30 11l18-5" stroke="#c4522f" /><path d="M30 15l22-8" stroke="#d8c860" /><path d="M30 18l22-6" stroke="#5f90c0" />
      <g transform="translate(13 31)" strokeWidth=".8"><path d="M0 0L4-7.500A10 8.500 0 1 0-5 7z" fill="#c4522f" /><path d="M0 0L4-7.500A10 8.500 0 0 1 9 4z" fill="#5fa3a0" /><path d="M0 0L9 4A10 8.500 0 0 1-5 7z" fill="#f7ec3e" /></g>
      <g transform="translate(40 31)" strokeWidth=".8"><path d="M0 0L4-7.500A10 8.500 0 1 0-5 7z" fill="#5fa3a0" /><path d="M0 0L4-7.500A10 8.500 0 0 1 9 4z" fill="#c4522f" /><path d="M0 0L9 4A10 8.500 0 0 1-5 7z" fill="#f7ec3e" /></g>
    </svg>
  );
}

function DatabaseIcon() {
  return (
    <svg width="43" height="43" viewBox="0 0 43 43">
      <defs>
        <linearGradient id="drum"><stop offset="0" stopColor="#b4b4e6" /><stop offset=".3" stopColor="#ececff" /><stop offset="1" stopColor="#8080c4" /></linearGradient>
      </defs>
      <path d="M1 5v31c0 7 36 7 36 0V5z" fill="url(#drum)" />
      <ellipse cx="19" cy="5" rx="18" ry="4.500" fill="#8f8fd0" stroke="#b8b8e8" />
      <path d="M1 14c2 5 34 5 36 0M1 23c2 5 34 5 36 0M1 32c2 5 34 5 36 0" stroke="#f4f4ff" fill="none" strokeWidth="1.200" />
      <circle cx="28" cy="28" r="12" fill="none" stroke="#8888b8" strokeWidth="5" strokeDasharray="4.700 4.700" />
      <circle cx="28" cy="28" r="12" fill="none" stroke="#d0d0ee" strokeWidth="4" strokeDasharray="4.200 5.200" />
      <circle cx="28" cy="28" r="10.500" fill="#cfcfee" stroke="#9090c0" strokeWidth=".7" />
      <circle cx="28" cy="28" r="4" fill="#a0a8dc" stroke="#6868a8" />
    </svg>
  );
}

function NotesIcon() {
  return (
    <svg width="45" height="42" viewBox="0 0 45 42">
      <path d="M1 7c10 1 20-3 31-6 1 11 4 22 12 30-12 0-19 5-27 10C9 31 4 20 1 7z" fill="#fff38a" stroke="#e0b030" strokeWidth="1.500" />
      <path d="M7 13c8 0 15-3 22-5M9 20c8 0 15-3 22-5M12 27c8 0 14-3 22-6M16 34c7-1 13-5 21-6" stroke="#cbb060" strokeWidth="2" fill="none" />
    </svg>
  );
}
